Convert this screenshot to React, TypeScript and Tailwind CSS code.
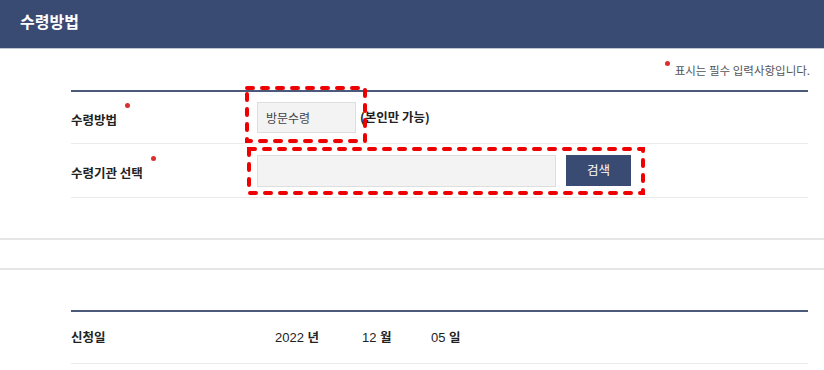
import React from "react";

const font = { fontFamily: '"Noto Sans CJK KR", "Liberation Sans", sans-serif' };
const numFont = { fontFamily: '"Liberation Sans", "Noto Sans CJK KR", sans-serif' };

function Dot({ className = "" }: { className?: string }) {
  return <span className={`inline-block w-[5px] h-[5px] rounded-full bg-[#d9302c] ${className}`} />;
}

function Label({ text }: { text: string }) {
  return (
    <div className="w-[186px] shrink-0 flex items-start">
      <span className="text-[12.5px] font-bold text-[#222] leading-[16px] mt-[4px]">{text}</span>
      <Dot className="ml-[8px] -mt-[5px]" />
    </div>
  );
}

export default function App() {
  return (
    <div className="relative w-[824px] h-[370px] bg-white overflow-hidden" style={font}>
      {/* header */}
      <div className="h-[49px] bg-[#394a73] border-b border-[#bfc5d1] flex items-center pl-[20px] pb-[6px]">
        <h1 className="text-white text-[16px] font-bold leading-none">수령방법</h1>
      </div>

      <div className="ml-[71px] mr-[16px]">
        <div className="h-[41px] flex justify-end items-start pt-[13px]">
          <Dot className="mr-[5px] -mt-[1px]" />
          <span className="text-[11.5px] leading-[16px] text-[#555] -mr-[2px]">표시는 필수 입력사항입니다.</span>
        </div>
        <div className="border-t-2 border-[#4b5a7b]" />

        <div className="h-[52px] flex items-center border-b border-[#ebebeb]">
          <Label text="수령방법" />
          <div className="w-[99px] h-[31px] bg-[#f3f3f3] border border-[#dedede] flex items-center pl-[8px] text-[12px] text-[#444]">
            방문수령
          </div>
          <span className="ml-[4px] text-[12.5px] font-bold text-[#222]">(본인만 가능)</span>
        </div>

        <div className="h-[54px] flex items-center border-b border-[#ebebeb]">
          <Label text="수령기관 선택" />
          <div className="w-[299px] h-[32px] bg-[#f3f3f3] border border-[#dedede]" />
          <button className="ml-[10px] w-[65px] h-[31px] bg-[#394a73] text-white text-[12.5px] flex items-center justify-center">
            검색
          </button>
        </div>
      </div>

      <div className="mt-[40px] border-t-2 border-[#e6e6e6]" />
      <div className="mt-[28px] border-t-2 border-[#e6e6e6]" />

      <div className="ml-[71px] mr-[16px] mt-[40px]">
        <div className="border-t-2 border-[#4b5a7b]" />
        <div className="h-[52px] flex items-center border-b border-[#ebebeb]">
          <div className="w-[204px] shrink-0 text-[12.5px] font-bold text-[#222]">신청일</div>
          <span className="w-[87px] text-[13px] text-[#222]" style={numFont}>
            2022 <span className="font-bold text-[12.5px]">년</span>
          </span>
          <span className="w-[69px] text-[13px] text-[#222]" style={numFont}>
            12 <span className="font-bold text-[12.5px]">월</span>
          </span>
          <span className="text-[13px] text-[#222]" style={numFont}>
            05 <span className="font-bold text-[12.5px]">일</span>
          </span>
        </div>
      </div>

      {/* red dashed annotations */}
      <svg className="absolute left-[245px] top-[86px]" width="122" height="57">
        <rect x="2" y="2" width="118" height="53" fill="none" stroke="#ee0000" strokeWidth="4" strokeDasharray="6 9" strokeLinecap="round" />
      </svg>
      <svg className="absolute left-[247px] top-[147px]" width="398" height="48">
        <rect x="2" y="2" width="394" height="44" fill="none" stroke="#ee0000" strokeWidth="4" strokeDasharray="6 9" strokeLinecap="round" />
      </svg>
    </div>
  );
}
